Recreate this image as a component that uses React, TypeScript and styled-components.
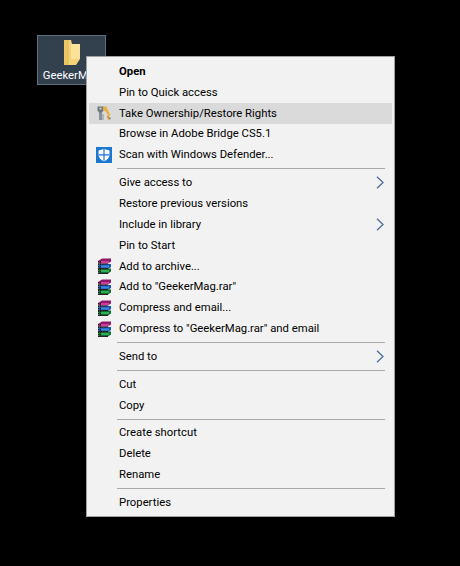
import React from "react";
import styled, { createGlobalStyle } from "styled-components";

const Global = createGlobalStyle`
  html, body { margin: 0; padding: 0; background: #000; }
  #root { width: 460px; height: 566px; }
`;

const Desktop = styled.div`
  position: relative;
  width: 460px;
  height: 566px;
  background: #000;
  overflow: hidden;
  font-family: Roboto, "Noto Sans", sans-serif;
`;

const FolderTile = styled.div`
  position: absolute;
  left: 37px;
  top: 35px;
  width: 69px;
  height: 50px;
  box-sizing: border-box;
  background: #33414f;
  border: 1px solid #5f6f7d;
  display: flex;
  flex-direction: column;
  align-items: center;
  padding-top: 3px;
`;

const TileLabel = styled.span`
  color: #fff;
  font-size: 11.3px;
  line-height: 16px;
  margin-top: 2px;
  white-space: nowrap;
`;

const Menu = styled.div`
  position: absolute;
  left: 86px;
  top: 56px;
  width: 309px;
  height: 461px;
  box-sizing: border-box;
  background: #f2f2f2;
  border: 1px solid #a0a0a0;
  padding: 4px 2px 0;
  display: flex;
  flex-direction: column;
  color: #000;
`;

const Row = styled.div<{ $active?: boolean; $bold?: boolean }>`
  height: 20.85px;
  flex: none;
  display: flex;
  align-items: center;
  gap: 7px;
  padding-left: 7px;
  padding-right: 7px;
  font-size: 11.3px;
  font-weight: ${(p) => (p.$bold ? 700 : 400)};
  background: ${(p) => (p.$active ? "#dadada" : "transparent")};
  white-space: nowrap;
`;

const IconSlot = styled.span`
  flex: none;
  width: 16px;
  height: 16px;
  display: flex;
`;

const Label = styled.span`
  flex: 1;
`;

const Chevron = styled.svg`
  flex: none;
  width: 8px;
  height: 13px;
  margin-right: 1px;
`;

const Divider = styled.div`
  flex: none;
  height: 1px;
  margin: 3px 7px 3px 28px;
  background: #a9a9a9;
`;

const FolderIcon = () => (
  <svg width="18" height="27" viewBox="0 0 18 27">
    <path d="M1 1h7l1 4h8v15l-4 6H1z" fill="#f3d27a" />
    <path d="M1 1h4v25H1z" fill="#ecc766" />
    <path d="M8 5h9v15H8z" fill="#fae29a" />
    <path d="M5 1v25" stroke="#e2b44f" strokeWidth="0.800" />
  </svg>
);

const KeysIcon = () => (
  <svg width="16" height="16" viewBox="0 0 16 16">
    <path d="M3 15V6h3v9z" fill="#8a9299" />
    <path d="M1.500 1.500h6v4l-1.500 2H3l-1.500-2z" fill="#6f777e" />
    <path d="M3.500 2.800h2v1.600h-2z" fill="#dadada" />
    <path d="M6 15V9h2v6z" fill="#b1b6bb" />
    <path d="M7 1.500h3.500l1 3 3 5.500-2 1.200-3-5.200H7.500z" fill="#eab03a" />
    <path d="M12 10.500l2.500 3.500-1.800 1-2-3.500z" fill="#d08f22" />
    <path d="M13.500 11.500l1.500 2-1 .8z" fill="#4d7fbf" />
  </svg>
);

const ShieldIcon = () => (
  <svg width="16" height="16" viewBox="0 0 16 16">
    <rect x="0" y="0" width="16" height="16" fill="#1b78d0" />
    <path d="M8 2l5.500 1.500V8c0 3-2.500 5-5.500 6.500C5 13 2.500 11 2.500 8V3.500z" fill="#fff" />
    <path d="M7.400 2h1.200v12.500H7.400zM2.500 7.300h11v1.200h-11z" fill="#1b78d0" />
  </svg>
);

const RarIcon = () => (
  <svg width="16" height="16" viewBox="0 0 16 16">
    <path d="M2 3l4-2.500h9v3l-3 2H3z" fill="#8e1a6c" />
    <path d="M5 3h8v2H5z" fill="#d63a98" />
    <path d="M2 7.500l2-1.500h11v3l-3 2H3z" fill="#1c55ad" />
    <path d="M5 7.500h8v2H5z" fill="#3a8ade" />
    <path d="M2 12l2-1.500h11v3l-3 2H3z" fill="#126b30" />
    <path d="M5 12h8v2H5z" fill="#2fae52" />
    <path d="M2.500 3v12.500M4.500 3v12.500" stroke="#111" strokeWidth="1" fill="none" strokeDasharray="1.500 1" />
    <path d="M2 6h10M2 10.500h10M2 15.500h10" stroke="#222" strokeWidth="1" />
  </svg>
);

const Arrow = () => (
  <Chevron viewBox="0 0 8 13">
    <path d="M1 .8 7 6.500 1 12.200" fill="none" stroke="#4a6f9c" strokeWidth="1.300" />
  </Chevron>
);

type Item =
  | "sep"
  | { label: string; bold?: boolean; active?: boolean; arrow?: boolean; icon?: React.ReactNode };

const items: Item[] = [
  { label: "Open", bold: true },
  { label: "Pin to Quick access" },
  { label: "Take Ownership/Restore Rights", active: true, icon: <KeysIcon /> },
  { label: "Browse in Adobe Bridge CS5.1" },
  { label: "Scan with Windows Defender...", icon: <ShieldIcon /> },
  "sep",
  { label: "Give access to", arrow: true },
  { label: "Restore previous versions" },
  { label: "Include in library", arrow: true },
  { label: "Pin to Start" },
  { label: "Add to archive...", icon: <RarIcon /> },
  { label: 'Add to "GeekerMag.rar"', icon: <RarIcon /> },
  { label: "Compress and email...", icon: <RarIcon /> },
  { label: 'Compress to "GeekerMag.rar" and email', icon: <RarIcon /> },
  "sep",
  { label: "Send to", arrow: true },
  "sep",
  { label: "Cut" },
  { label: "Copy" },
  "sep",
  { label: "Create shortcut" },
  { label: "Delete" },
  { label: "Rename" },
  "sep",
  { label: "Properties" },
];

export default function App() {
  return (
    <Desktop>
      <Global />
      <FolderTile>
        <FolderIcon />
        <TileLabel>GeekerMag</TileLabel>
      </FolderTile>
      <Menu>
        {items.map((it, i) =>
          it === "sep" ? (
            <Divider key={i} />
          ) : (
            <Row key={i} $active={it.active} $bold={it.bold}>
              <IconSlot>{it.icon}</IconSlot>
              <Label>{it.label}</Label>
              {it.arrow && <Arrow />}
            </Row>
          )
        )}
      </Menu>
    </Desktop>
  );
}
